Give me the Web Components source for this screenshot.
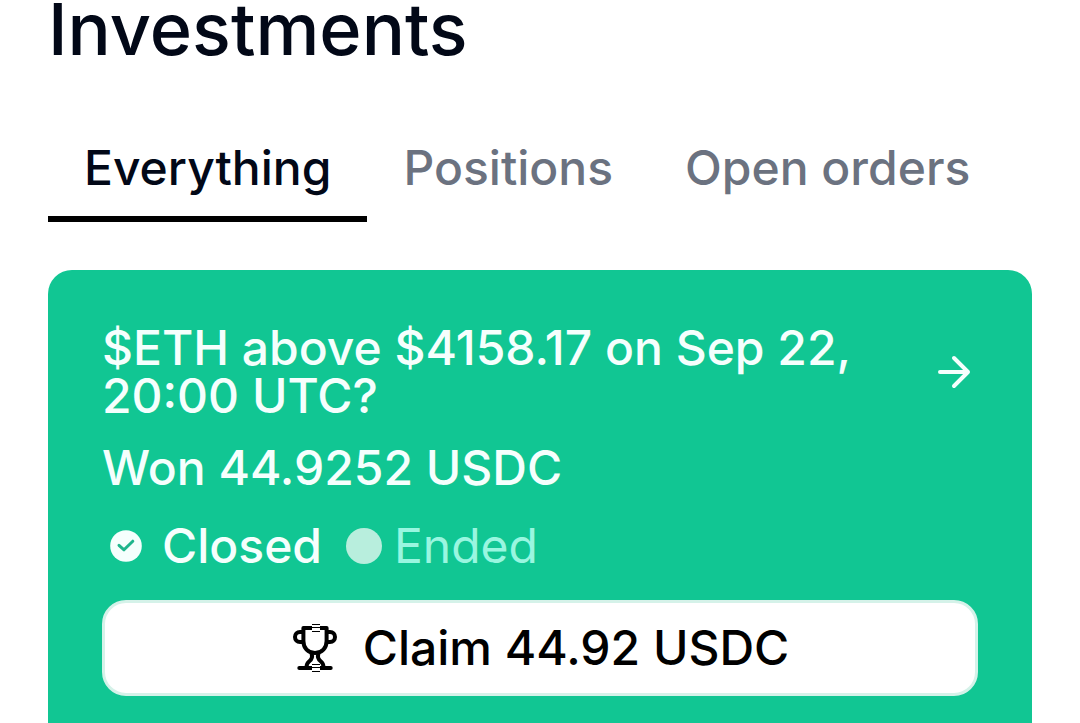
<!DOCTYPE html>
<html lang="en">
<head>
<meta charset="utf-8">
<title>Investments</title>
<style>
  body {
    margin: 0;
    height: 723px;
    overflow: hidden;
    background: #fff;
    color: #020817;
    font: 500 48px/48px Inter, "Liberation Sans", sans-serif;
  }
</style>
</head>
<body>
<investments-page>
  <span slot="title">Investments</span>
  <tab-bar slot="tabs">
    <tab-item active>Everything</tab-item>
    <tab-item>Positions</tab-item>
    <tab-item>Open orders</tab-item>
  </tab-bar>
  <position-card>
    <span slot="question">$ETH above $4158.17 on Sep 22, 20:00 UTC?</span>
    <span slot="result">Won 44.9252 USDC</span>
    <position-status slot="status" kind="closed">Closed</position-status>
    <position-status slot="status" kind="ended">Ended</position-status>
    <claim-button slot="action">Claim 44.92 USDC</claim-button>
  </position-card>
</investments-page>

<script>
window.customElements.define("investments-page", class extends HTMLElement {
  constructor() {
    super();
    this.attachShadow({ mode: "open" });
    this.shadowRoot.innerHTML = `
      <style>
        :host {
          display: flex;
          flex-direction: column;
          box-sizing: border-box;
          height: 723px;
          padding: 0 48px;
          overflow: hidden;
        }
        h1 {
          flex: none;
          margin: 0;
          height: 120px;
          font-size: 72px;
          font-weight: 500;
          line-height: 58px;
        }
      </style>
      <h1><slot name="title"></slot></h1>
      <slot name="tabs"></slot>
      <slot></slot>
    `;
  }
});

window.customElements.define("tab-bar", class extends HTMLElement {
  constructor() {
    super();
    this.attachShadow({ mode: "open" });
    this.shadowRoot.innerHTML = `
      <style>
        :host {
          display: flex;
          flex: none;
          height: 102px;
          margin-bottom: 48px;
        }
      </style>
      <slot></slot>
    `;
  }
});

window.customElements.define("tab-item", class extends HTMLElement {
  constructor() {
    super();
    this.attachShadow({ mode: "open" });
    this.shadowRoot.innerHTML = `
      <style>
        :host {
          display: block;
          box-sizing: border-box;
          height: 102px;
          padding: 24px 36px 0;
          border-bottom: 6px solid transparent;
          color: #6b7280;
          white-space: nowrap;
        }
        :host([active]) {
          border-color: #000;
          color: #020817;
        }
      </style>
      <slot></slot>
    `;
  }
});

window.customElements.define("position-card", class extends HTMLElement {
  constructor() {
    super();
    this.attachShadow({ mode: "open" });
    this.shadowRoot.innerHTML = `
      <style>
        :host {
          display: block;
          flex: 1;
          box-sizing: border-box;
          padding: 54px 54px 0;
          border-radius: 24px 24px 0 0;
          background: #11c693;
          color: #f5fffd;
        }
        .top {
          display: flex;
          align-items: center;
          justify-content: space-between;
        }
        .question {
          width: 780px;
        }
        svg {
          display: block;
          width: 48px;
          height: 48px;
        }
        .result {
          margin-top: 24px;
        }
        .statuses {
          display: flex;
          gap: 24px;
          margin-top: 30px;
        }
        .action {
          margin-top: 30px;
        }
      </style>
      <div class="top">
        <div class="question"><slot name="question"></slot></div>
        <svg viewBox="0 0 24 24" fill="none" stroke="currentColor" stroke-width="2" stroke-linecap="round" stroke-linejoin="round">
          <path d="M5 12h14M12 5l7 7-7 7"/>
        </svg>
      </div>
      <div class="result"><slot name="result"></slot></div>
      <div class="statuses"><slot name="status"></slot></div>
      <div class="action"><slot name="action"></slot></div>
    `;
  }
});

window.customElements.define("position-status", class extends HTMLElement {
  constructor() {
    super();
    this.attachShadow({ mode: "open" });
    this.shadowRoot.innerHTML = `
      <style>
        :host {
          display: flex;
          align-items: center;
        }
        svg {
          display: none;
          width: 36px;
          height: 36px;
          margin: 0 18px 0 6px;
        }
        i {
          display: none;
          width: 36px;
          height: 36px;
          margin-right: 12px;
          border-radius: 50%;
          background: #b8eedd;
        }
        :host([kind="closed"]) svg,
        :host([kind="ended"]) i {
          display: block;
        }
        :host([kind="ended"]) {
          color: #99f6e0;
          font-weight: 400;
        }
      </style>
      <svg viewBox="0 0 36 36" fill="none">
        <circle cx="18" cy="18" r="15.8" fill="#f5fffd"/>
        <path d="M11 17.300l5 4.500 8.800-8.600" stroke="#1fb58c" stroke-width="3" stroke-linecap="round" stroke-linejoin="round"/>
      </svg>
      <i></i>
      <span><slot></slot></span>
    `;
  }
});

window.customElements.define("claim-button", class extends HTMLElement {
  constructor() {
    super();
    this.attachShadow({ mode: "open" });
    this.shadowRoot.innerHTML = `
      <style>
        :host {
          display: block;
        }
        button {
          display: flex;
          align-items: center;
          justify-content: center;
          gap: 24px;
          width: 100%;
          height: 96px;
          padding: 0;
          border: 3px solid #d5f2e9;
          border-radius: 24px;
          background: #fff;
          color: #000;
          font: inherit;
        }
        svg {
          display: block;
          width: 48px;
          height: 48px;
        }
      </style>
      <button>
        <svg viewBox="0 0 48 48" fill="none" stroke="currentColor" stroke-width="4" stroke-linejoin="round">
          <path d="M12.400 4h23.200v13c0 7-4.600 12-11.600 12s-11.600-5-11.600-12z"/>
          <path d="M12.400 8H9c-3 0-5 2-5 5s2 5 5 5h3.400M35.600 8H39c3 0 5 2 5 5s-2 5-5 5h-3.400"/>
          <path d="M20.500 29.500c1.500 4 .3 6-2.300 7.800-1.700 1.200-2.700 3-2.700 6.200M27.500 29.500c-1.500 4-.3 6 2.300 7.800 1.700 1.200 2.700 3 2.700 6.200"/>
          <path d="M8.300 44h31.400" stroke-linecap="round"/>
          <path d="M21 0h8v8h-8zM21 40h8v8h-8z" fill="#fff" stroke="none"/>
          <path d="M21 .5h8M21 3.500h8M21 7.500h8M21 40.500h8M21 43.500h8M21 47.500h8" stroke-width="1" shape-rendering="crispEdges"/>
        </svg>
        <span><slot></slot></span>
      </button>
    `;
  }
});
</script>
</body>
</html>
